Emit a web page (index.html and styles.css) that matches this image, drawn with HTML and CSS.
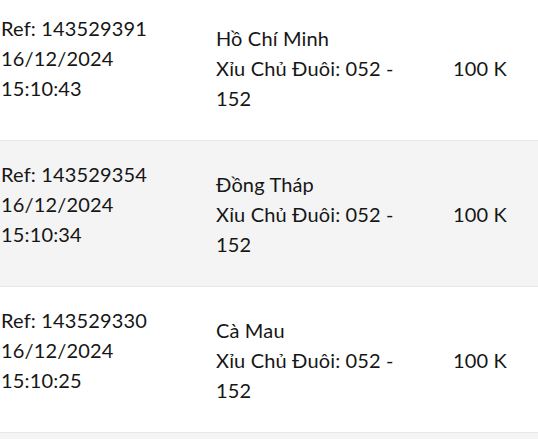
FILE: index.html
```html
<!DOCTYPE html>
<html lang="vi">
<head>
<meta charset="utf-8">
<link rel="stylesheet" href="styles.css">
</head>
<body>
<div class="list">
  <div class="row">
    <div class="meta">
      <div>Ref: 143529391</div>
      <div>16/12/2024</div>
      <div>15:10:43</div>
    </div>
    <div class="bet">
      <div>Hồ Chí Minh</div>
      <div>Xỉu Chủ Đuôi: 052 - 152</div>
    </div>
    <div class="amount">100 K</div>
  </div>
  <div class="row alt">
    <div class="meta">
      <div>Ref: 143529354</div>
      <div>16/12/2024</div>
      <div>15:10:34</div>
    </div>
    <div class="bet">
      <div>Đồng Tháp</div>
      <div>Xỉu Chủ Đuôi: 052 - 152</div>
    </div>
    <div class="amount">100 K</div>
  </div>
  <div class="row">
    <div class="meta">
      <div>Ref: 143529330</div>
      <div>16/12/2024</div>
      <div>15:10:25</div>
    </div>
    <div class="bet">
      <div>Cà Mau</div>
      <div>Xỉu Chủ Đuôi: 052 - 152</div>
    </div>
    <div class="amount">100 K</div>
  </div>
</div>
</body>
</html>
```
FILE: styles.css
```css
html, body {
  margin: 0;
  padding: 0;
  background: #f4f4f4;
}
body {
  font-family: "Lato", "Noto Sans", sans-serif;
  font-size: 20px;
  line-height: 30px;
  letter-spacing: 0.15px;
  color: #161616;
  overflow: hidden;
}
.list {
  margin-top: -5px;
}
.row {
  display: flex;
  align-items: center;
  height: 145px;
  border-bottom: 1px solid #e8e8e8;
  background: #ffffff;
}
.row.alt {
  background: #f4f4f4;
}
.meta {
  width: 215px;
  padding-left: 1px;
  padding-bottom: 20px;
  flex-shrink: 0;
}
.bet {
  width: 200px;
  flex-shrink: 0;
}
.amount {
  margin-left: 37px;
}
```
